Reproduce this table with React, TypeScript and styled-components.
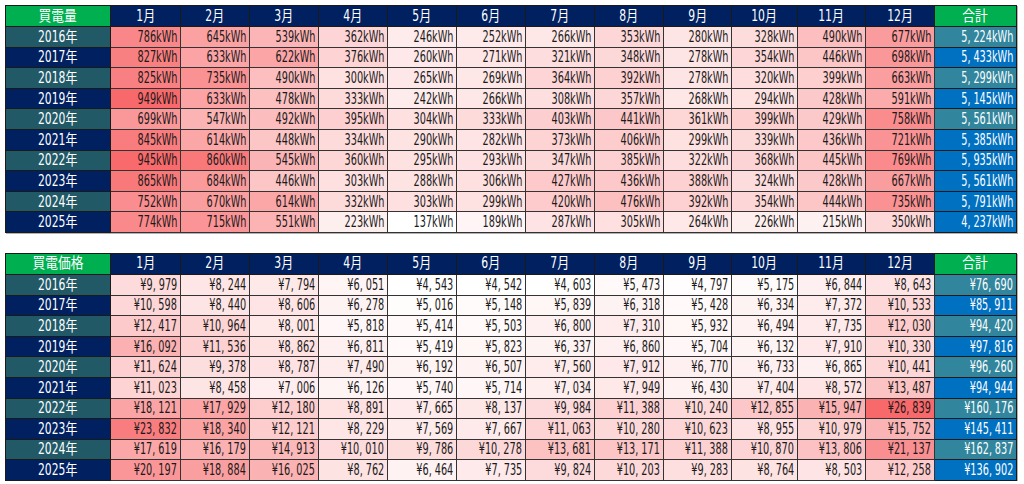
import React from 'react';
import styled, { createGlobalStyle } from 'styled-components';

const GlobalStyle = createGlobalStyle`
  body {
    margin: 0;
    background: #ffffff;
    font-family: "DejaVu Sans Condensed", "DejaVu Sans", "Noto Sans CJK JP", sans-serif;
  }
`;

const Page = styled.div`
  padding: 5px 0 0 5px;
  display: flex;
  flex-direction: column;
  gap: 20px;
`;

const Table = styled.table`
  border-collapse: collapse;
  table-layout: fixed;
  width: 1011px;
  font-size: 15px;
  box-shadow: 1px 1px 0 #b0b0b0;
`;

// the sheet uses a narrow face; squeeze the condensed one to the same width
const Squeeze = styled.span<{ $origin?: string; $scale?: number }>`
  display: inline-block;
  transform: scaleX(${(p) => p.$scale ?? 0.72});
  transform-origin: ${(p) => p.$origin || 'right'} center;
  white-space: nowrap;
`;

const Comma = styled.span`
  padding-right: 4px;
`;

const HeadCell = styled.th<{ $green?: boolean }>`
  height: 20px;
  padding: 0;
  background: ${(p) => (p.$green ? '#00b050' : '#002060')};
  color: #ffffff;
  font-weight: normal;
  text-align: center;
  border: 1px solid #1a1a1a;
  line-height: 19px;
  overflow: hidden;
`;

const YearCell = styled.td<{ $teal: boolean }>`
  height: 19.6px;
  padding: 0;
  background: ${(p) => (p.$teal ? '#215967' : '#002060')};
  color: #ffffff;
  text-align: center;
  border: 1px solid #1a1a1a;
  line-height: 18px;
`;

const DataCell = styled.td`
  padding: 0 3px 0 0;
  text-align: right;
  color: #1a1a1a;
  border: 1px solid #333333;
  line-height: 18px;
  white-space: nowrap;
  overflow: hidden;
`;

const TotalCell = styled.td<{ $teal: boolean }>`
  padding: 0 3px 0 0;
  text-align: right;
  color: #ffffff;
  background: ${(p) => (p.$teal ? '#31859c' : '#0070c0')};
  border: 1px solid #1a1a1a;
  line-height: 18px;
  white-space: nowrap;
  overflow: hidden;
`;

const colWidths = [105, 70, 69, 69, 69, 69, 69, 69, 69, 68, 66, 68, 69, 82];
const months = ['1月', '2月', '3月', '4月', '5月', '6月', '7月', '8月', '9月', '10月', '11月', '12月'];
const years = [2016, 2017, 2018, 2019, 2020, 2021, 2022, 2023, 2024, 2025];

const kwh = [
  [786, 645, 539, 362, 246, 252, 266, 353, 280, 328, 490, 677],
  [827, 633, 622, 376, 260, 271, 321, 348, 278, 354, 446, 698],
  [825, 735, 490, 300, 265, 269, 364, 392, 278, 320, 399, 663],
  [949, 633, 478, 333, 242, 266, 308, 357, 268, 294, 428, 591],
  [699, 547, 492, 395, 304, 333, 403, 441, 361, 399, 429, 758],
  [845, 614, 448, 334, 290, 282, 373, 406, 299, 339, 436, 721],
  [945, 860, 545, 360, 295, 293, 347, 385, 322, 368, 445, 769],
  [865, 684, 446, 303, 288, 306, 427, 436, 388, 324, 428, 667],
  [752, 670, 614, 332, 303, 299, 420, 476, 392, 354, 444, 735],
  [774, 715, 551, 223, 137, 189, 287, 305, 264, 226, 215, 350],
];
const kwhTotals = [5224, 5433, 5299, 5145, 5561, 5385, 5935, 5561, 5791, 4237];
const kwhTeal = [true, false, true, false, true, false, false, false, false, false];

const yen = [
  [9979, 8244, 7794, 6051, 4543, 4542, 4603, 5473, 4797, 5175, 6844, 8643],
  [10598, 8440, 8606, 6278, 5016, 5148, 5839, 6318, 5428, 6334, 7372, 10533],
  [12417, 10964, 8001, 5818, 5414, 5503, 6800, 7310, 5932, 6494, 7735, 12030],
  [16092, 11536, 8862, 6811, 5419, 5823, 6337, 6860, 5704, 6132, 7910, 10330],
  [11624, 9378, 8787, 7490, 6192, 6507, 7560, 7912, 6770, 6733, 6865, 10441],
  [11023, 8458, 7006, 6126, 5740, 5714, 7034, 7949, 6430, 7404, 8572, 13487],
  [18121, 17929, 12180, 8891, 7665, 8137, 9984, 11388, 10240, 12855, 15947, 26839],
  [23832, 18340, 12121, 8229, 7569, 7667, 11063, 10280, 10623, 8955, 10979, 15752],
  [17619, 16179, 14913, 10010, 9786, 10278, 13681, 13171, 11388, 10870, 13806, 21137],
  [20197, 18884, 16025, 8762, 6464, 7735, 9824, 10203, 9283, 8764, 8503, 12258],
];
const yenTotals = [76690, 85911, 94420, 97816, 96260, 94944, 160176, 145411, 162837, 136902];
const yenTeal = years.map((_, i) => i % 2 === 0);

// excel-like two colour scale: white -> #f8696b
const heat = (v: number, min: number, max: number) => {
  const t = (v - min) / (max - min);
  const r = Math.round(255 + (248 - 255) * t);
  const g = Math.round(255 + (105 - 255) * t);
  const b = Math.round(255 + (107 - 255) * t);
  return `rgb(${r},${g},${b})`;
};

const Num: React.FC<{ value: number; prefix?: string; suffix?: string }> = ({ value, prefix = '', suffix = '' }) => {
  const parts = value.toLocaleString('en-US').split(',');
  return (
    <>
      {prefix}
      {parts.map((p, i) => (
        <React.Fragment key={i}>
          {p}
          {i < parts.length - 1 && <Comma>,</Comma>}
        </React.Fragment>
      ))}
      {suffix}
    </>
  );
};

type HeatTableProps = {
  title: string;
  data: number[][];
  totals: number[];
  totalTeal: boolean[];
  prefix?: string;
  suffix?: string;
};

const HeatTable: React.FC<HeatTableProps> = ({ title, data, totals, totalTeal, prefix, suffix }) => {
  const flat = data.flat();
  const min = Math.min(...flat);
  const max = Math.max(...flat);
  return (
    <Table>
      <colgroup>
        {colWidths.map((w, i) => (
          <col key={i} style={{ width: w }} />
        ))}
      </colgroup>
      <thead>
        <tr>
          <HeadCell $green>
            <Squeeze $origin="center" $scale={0.85}>{title}</Squeeze>
          </HeadCell>
          {months.map((m) => (
            <HeadCell key={m}>
              <Squeeze $origin="center" $scale={0.8}>{m}</Squeeze>
            </HeadCell>
          ))}
          <HeadCell $green>
            <Squeeze $origin="center" $scale={0.85}>合計</Squeeze>
          </HeadCell>
        </tr>
      </thead>
      <tbody>
        {data.map((row, i) => (
          <tr key={years[i]}>
            <YearCell $teal={i % 2 === 0}>
              <Squeeze $origin="center" $scale={0.8}>{years[i]}年</Squeeze>
            </YearCell>
            {row.map((v, j) => (
              <DataCell key={j} style={{ background: heat(v, min, max) }}>
                <Squeeze>
                  <Num value={v} prefix={prefix} suffix={suffix} />
                </Squeeze>
              </DataCell>
            ))}
            <TotalCell $teal={totalTeal[i]}>
              <Squeeze>
                <Num value={totals[i]} prefix={prefix} suffix={suffix} />
              </Squeeze>
            </TotalCell>
          </tr>
        ))}
      </tbody>
    </Table>
  );
};

const App: React.FC = () => {
  return (
    <Page>
      <GlobalStyle />
      <HeatTable title="買電量" data={kwh} totals={kwhTotals} totalTeal={kwhTeal} suffix="kWh" />
      <HeatTable title="買電価格" data={yen} totals={yenTotals} totalTeal={yenTeal} prefix="¥" />
    </Page>
  );
};

export default App;
